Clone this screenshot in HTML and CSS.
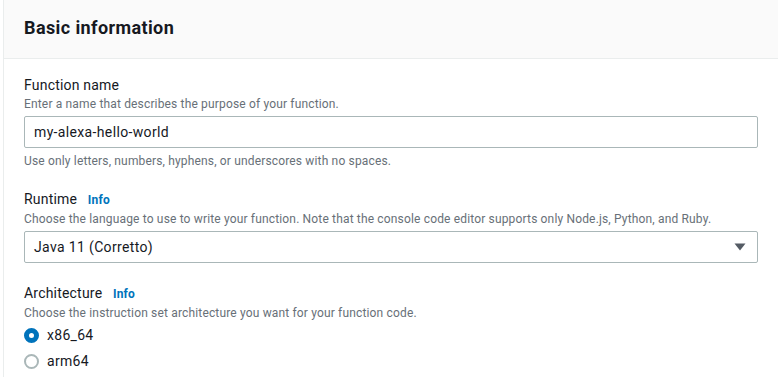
FILE: index.html
```html
<!DOCTYPE html>
<html lang="en">
<head>
  <meta charset="UTF-8" />
  <title>Basic information</title>
  <link rel="stylesheet" href="styles.css">
</head>
<body>
  <div class="panel">
    <div class="panel-header">
      <h2>Basic information</h2>
    </div>
    <div class="panel-body">
      <div class="field">
        <div class="label">Function name</div>
        <div class="desc">Enter a name that describes the purpose of your function.</div>
        <div class="input">my-alexa-hello-world</div>
        <div class="desc constraint">Use only letters, numbers, hyphens, or underscores with no spaces.</div>
      </div>

      <div class="field">
        <div class="label">Runtime <a class="info">Info</a></div>
        <div class="desc">Choose the language to use to write your function. Note that the console code editor supports only Node.js, Python, and Ruby.</div>
        <div class="input select">
          <span>Java 11 (Corretto)</span>
          <svg class="caret" width="12" height="8" viewBox="0 0 12 8"><path d="M0.5 0.5 H11.5 L6 7.5 Z" fill="#545b64"/></svg>
        </div>
      </div>

      <div class="field">
        <div class="label">Architecture <a class="info">Info</a></div>
        <div class="desc">Choose the instruction set architecture you want for your function code.</div>
        <div class="radios">
          <label class="radio"><span class="dot checked"></span>x86_64</label>
          <label class="radio"><span class="dot"></span>arm64</label>
        </div>
      </div>
    </div>
  </div>
</body>
</html>
```

FILE: styles.css
```css
body {
  margin: 0;
  background: #ffffff;
  font-family: Roboto, "Liberation Sans", sans-serif;
  color: #16191f;
}

.panel {
  margin-left: 3px;
  border-left: 1px solid #eaeded;
  min-height: 377px;
}

.panel-header {
  background: #fafafa;
  border-bottom: 1px solid #eaeded;
  padding: 17px 20px 19px;
}

.panel-header h2 {
  margin: 0;
  font-size: 18px;
  line-height: 22px;
  font-weight: 700;
  letter-spacing: 0.4px;
}

.panel-body {
  padding: 15px 20px 0;
}

.field {
  margin-bottom: 19px;
}

.label {
  font-size: 14px;
  line-height: 22px;
  letter-spacing: 0.2px;
}

.info {
  margin-left: 7px;
  font-size: 12px;
  font-weight: 700;
  color: #0073bb;
  letter-spacing: 0.2px;
}

.desc {
  font-size: 12px;
  line-height: 16px;
  color: #687078;
  letter-spacing: 0.16px;
}

.constraint {
  margin-top: 5px;
}

.input {
  margin-top: 4px;
  height: 30px;
  border: 1px solid #aab7b8;
  border-radius: 2px;
  padding: 0 9px;
  font-size: 14px;
  line-height: 30px;
  letter-spacing: 0.35px;
  display: flex;
  align-items: center;
}

.select {
  justify-content: space-between;
  padding-right: 11px;
}

.radios {
  margin-top: 3px;
  display: flex;
  flex-direction: column;
  gap: 4px;
}

.radio {
  display: flex;
  align-items: center;
  gap: 8px;
  font-size: 14px;
  line-height: 22px;
  letter-spacing: 0.3px;
}

.dot {
  box-sizing: border-box;
  width: 15px;
  height: 15px;
  border-radius: 50%;
  border: 2px solid #aab7b8;
  background: #fff;
}

.dot.checked {
  border: 5px solid #0073bb;
}
```
